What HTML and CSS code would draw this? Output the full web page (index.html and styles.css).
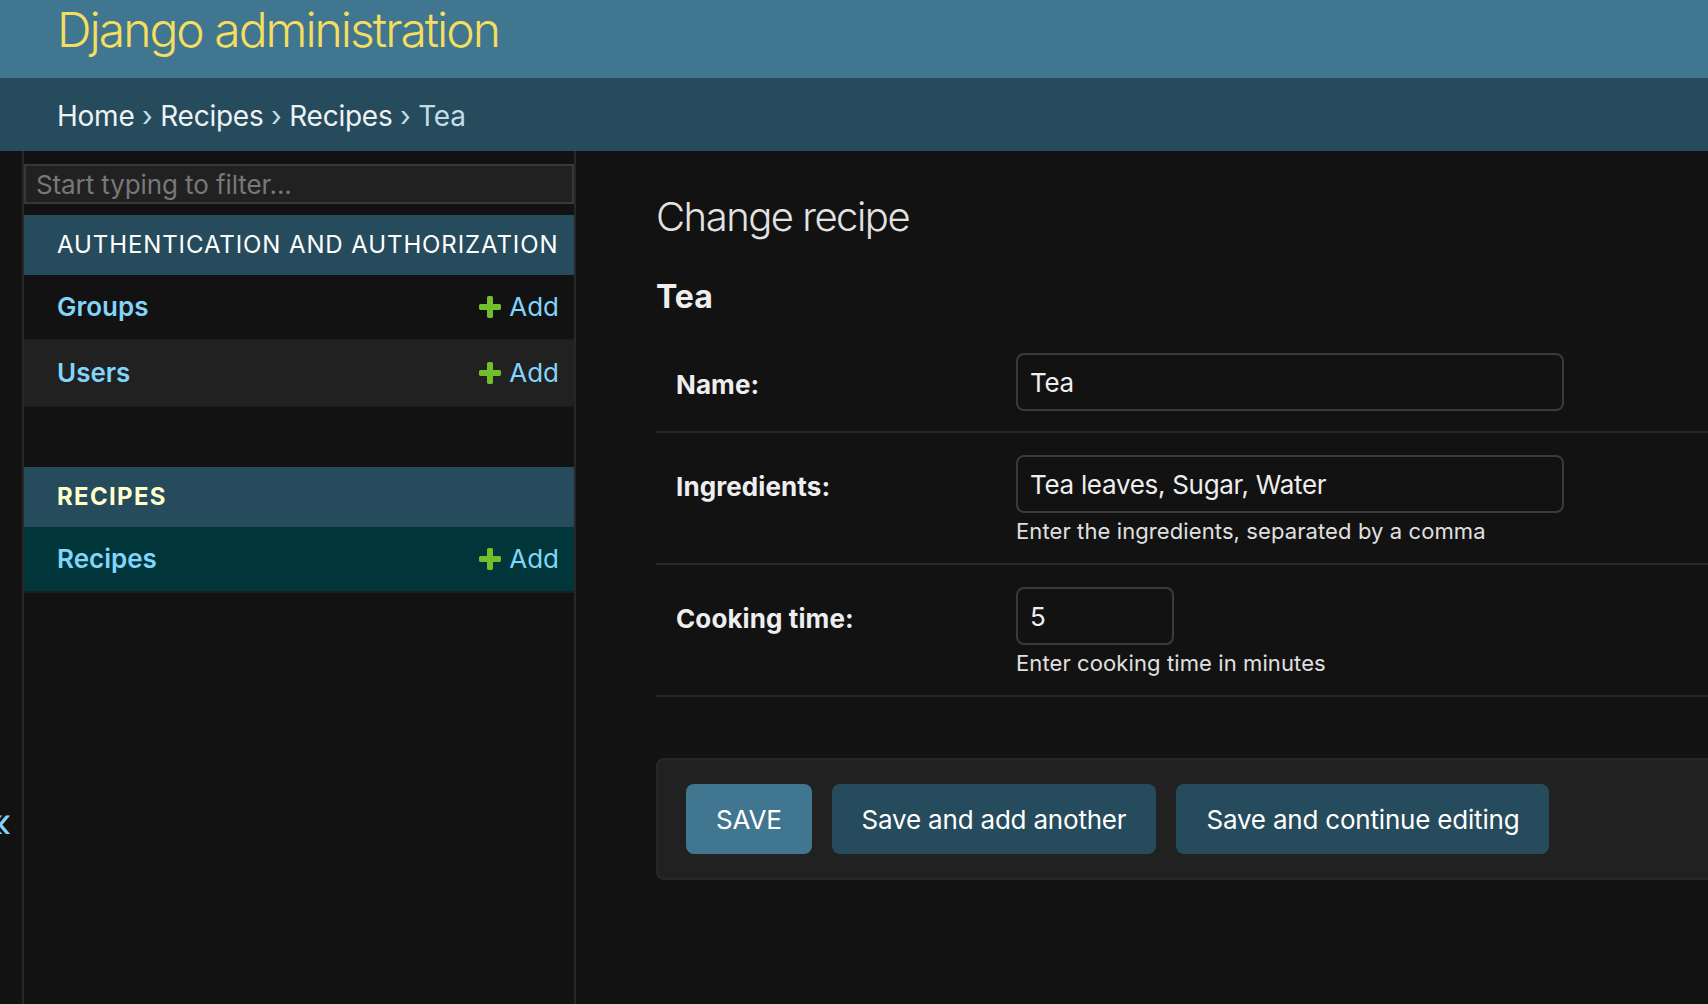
FILE: index.html
```html
<!DOCTYPE html>
<html lang="en">
<head>
<meta charset="utf-8">
<title>Change recipe | Django site admin</title>
<link rel="stylesheet" href="styles.css">
</head>
<body>
<div class="page">
  <header class="header">
    <h1 class="site-name">Django administration</h1>
  </header>
  <nav class="breadcrumbs">
    <a href="#">Home</a> › <a href="#">Recipes</a> › <a href="#">Recipes</a> › Tea
  </nav>
  <div class="main">
    <button class="toggle-nav" type="button" aria-label="Toggle navigation"><span class="toggle-glyph">«</span></button>
    <nav class="sidebar">
      <input class="nav-filter" type="search" placeholder="Start typing to filter...">
      <div class="app">
        <div class="app-caption"><a href="#">Authentication and Authorization</a></div>
        <div class="model-row">
          <a class="model-link" href="#">Groups</a>
          <a class="addlink" href="#"><svg class="add-icon" viewBox="0 0 1792 1792" aria-hidden="true"><path d="M1600 796v192q0 40-28 68t-68 28h-416v416q0 40-28 68t-68 28h-192q-40 0-68-28t-28-68v-416h-416q-40 0-68-28t-28-68v-192q0-40 28-68t68-28h416v-416q0-40 28-68t68-28h192q40 0 68 28t28 68v416h416q40 0 68 28t28 68z"/></svg>Add</a>
        </div>
        <div class="model-row alt">
          <a class="model-link" href="#">Users</a>
          <a class="addlink" href="#"><svg class="add-icon" viewBox="0 0 1792 1792" aria-hidden="true"><path d="M1600 796v192q0 40-28 68t-68 28h-416v416q0 40-28 68t-68 28h-192q-40 0-68-28t-28-68v-416h-416q-40 0-68-28t-28-68v-192q0-40 28-68t68-28h416v-416q0-40 28-68t68-28h192q40 0 68 28t28 68v416h416q40 0 68 28t28 68z"/></svg>Add</a>
        </div>
      </div>
      <div class="app current-app">
        <div class="app-caption"><a href="#">Recipes</a></div>
        <div class="model-row current-model">
          <a class="model-link" href="#">Recipes</a>
          <a class="addlink" href="#"><svg class="add-icon" viewBox="0 0 1792 1792" aria-hidden="true"><path d="M1600 796v192q0 40-28 68t-68 28h-416v416q0 40-28 68t-68 28h-192q-40 0-68-28t-28-68v-416h-416q-40 0-68-28t-28-68v-192q0-40 28-68t68-28h416v-416q0-40 28-68t68-28h192q40 0 68 28t28 68v416h416q40 0 68 28t28 68z"/></svg>Add</a>
        </div>
      </div>
    </nav>
    <main class="content">
      <h1 class="title">Change recipe</h1>
      <h2 class="subtitle">Tea</h2>
      <form class="change-form">
        <fieldset class="fieldset">
          <div class="form-row">
            <label class="field-label" for="id_name">Name:</label>
            <div class="field-box">
              <input class="text-input wide" id="id_name" type="text" value="Tea">
            </div>
          </div>
          <div class="form-row with-help">
            <label class="field-label" for="id_ingredients">Ingredients:</label>
            <div class="field-box">
              <input class="text-input wide" id="id_ingredients" type="text" value="Tea leaves, Sugar, Water">
              <div class="help">Enter the ingredients, separated by a comma</div>
            </div>
          </div>
          <div class="form-row with-help">
            <label class="field-label" for="id_cooking_time">Cooking time:</label>
            <div class="field-box">
              <input class="text-input small" id="id_cooking_time" type="text" value="5">
              <div class="help">Enter cooking time in minutes</div>
            </div>
          </div>
        </fieldset>
        <div class="submit-row">
          <button class="btn default" type="button">SAVE</button>
          <button class="btn" type="button">Save and add another</button>
          <button class="btn" type="button">Save and continue editing</button>
        </div>
      </form>
    </main>
  </div>
</div>
</body>
</html>
```
FILE: styles.css
```css
* { box-sizing: border-box; }

html, body {
  margin: 0;
  height: 100%;
}

body {
  background: #121212;
  color: #eeeeee;
  font-family: Inter, "Noto Sans", sans-serif;
  overflow: hidden;
}

.page {
  display: flex;
  flex-direction: column;
  height: 100vh;
}

/* Header */
.header {
  flex: none;
  height: 78px;
  padding: 2px 57px 0;
  background: #417690;
}

.site-name {
  margin: 0;
  font-size: 48px;
  line-height: 56px;
  font-weight: 300;
  color: #f5dd5d;
  letter-spacing: -2px;
}

.breadcrumbs {
  flex: none;
  height: 73px;
  padding: 22px 57px 18px;
  background: #264b5d;
  color: #c4dce8;
  font-size: 28px;
  line-height: 33px;
  letter-spacing: -0.25px;
}

.breadcrumbs a {
  color: #edf2f5;
  text-decoration: none;
}

/* Main */
.main {
  flex: 1;
  display: flex;
  min-height: 0;
}

.toggle-nav {
  flex: 0 0 46px;
  margin-left: -22px;
  display: flex;
  justify-content: center;
  align-items: flex-start;
  padding: 652px 0 0;
  background: #121212;
  border: 0;
  border-right: 2px solid #272727;
  color: #81d4fa;
  font-family: Inter, sans-serif;
  font-size: 40px;
  line-height: 40px;
}

/* Sidebar */
.sidebar {
  flex: 0 0 552px;
  padding-top: 13px;
  border-right: 2px solid #272727;
}

.nav-filter {
  display: block;
  width: 100%;
  height: 40px;
  margin: 0 0 11px;
  padding: 0 10px;
  border: 2px solid #383838;
  background: #212121;
  color: #eeeeee;
  font-family: Inter, sans-serif;
  font-size: 26px;
  letter-spacing: -0.1px;
  outline: none;
}

.nav-filter::placeholder { color: #787878; }

.app { margin-bottom: 60px; }

.app-caption {
  height: 60px;
  padding: 16px 15px 16px 33px;
  background: #264b5d;
  font-size: 24px;
  line-height: 28px;
  letter-spacing: 0.9px;
  text-transform: uppercase;
}

.app-caption a {
  color: #ffffff;
  text-decoration: none;
}

.current-app .app-caption a {
  color: #ffffcc;
  font-weight: 700;
  letter-spacing: 1.3px;
}

.model-row {
  display: flex;
  align-items: flex-start;
  justify-content: space-between;
  height: 66px;
  padding: 16px 15px 0 33px;
  border-bottom: 2px solid #1e1e1e;
  font-size: 26px;
  line-height: 32px;
}

.model-row.alt { background: #212121; }
.model-row.current-model { background: #00363a; }

.model-link {
  color: #81d4fa;
  font-weight: 600;
  text-decoration: none;
}

.addlink {
  display: flex;
  align-items: center;
  height: 32px;
  gap: 5px;
  color: #81d4fa;
  text-decoration: none;
}

.add-icon {
  width: 28px;
  height: 28px;
  fill: #70bf2b;
}

/* Content */
.content {
  flex: 1;
  min-width: 0;
  padding: 41px 0 0 80px;
}

.title {
  margin: 0 0 35px;
  font-size: 40px;
  line-height: 50px;
  font-weight: 300;
  color: #e2e2e2;
  letter-spacing: -1.5px;
}

.subtitle {
  margin: 0 0 14px;
  font-size: 32px;
  line-height: 40px;
  font-weight: 700;
  color: #eeeeee;
}

.change-form { margin: 0; }

.fieldset {
  margin: 0;
  padding: 0;
  border: 0;
  min-width: 0;
}

.form-row {
  display: flex;
  padding: 20px;
  border-bottom: 2px solid #272727;
}

.form-row.with-help { padding-bottom: 19px; }

.field-label {
  flex: 0 0 340px;
  padding-top: 18px;
  font-size: 26px;
  line-height: 32px;
  font-weight: 700;
  color: #eeeeee;
  letter-spacing: 0.1px;
}

.field-box {
  display: flex;
  flex-direction: column;
  padding-top: 2px;
}

.text-input {
  height: 58px;
  padding: 0 12px;
  border: 2px solid #3a3a3a;
  border-radius: 8px;
  background: #121212;
  color: #eeeeee;
  font-family: Inter, sans-serif;
  font-size: 26px;
  letter-spacing: -0.3px;
  outline: none;
}

.text-input.wide { width: 548px; }
.text-input.small { width: 158px; }

.help {
  margin-top: 6px;
  font-size: 22px;
  line-height: 25px;
  color: #e0e0e0;
  letter-spacing: 0.1px;
}

.submit-row {
  display: flex;
  gap: 20px;
  margin-top: 61px;
  padding: 24px 28px;
  background: #212121;
  border: 2px solid #272727;
  border-right: 0;
  border-radius: 8px 0 0 8px;
}

.btn {
  height: 70px;
  padding: 0 30px;
  border: 0;
  border-radius: 8px;
  background: #264b5d;
  color: #ffffff;
  font-family: Inter, sans-serif;
  font-size: 26px;
  letter-spacing: -0.2px;
}

.btn.default { background: #417690; }
```
